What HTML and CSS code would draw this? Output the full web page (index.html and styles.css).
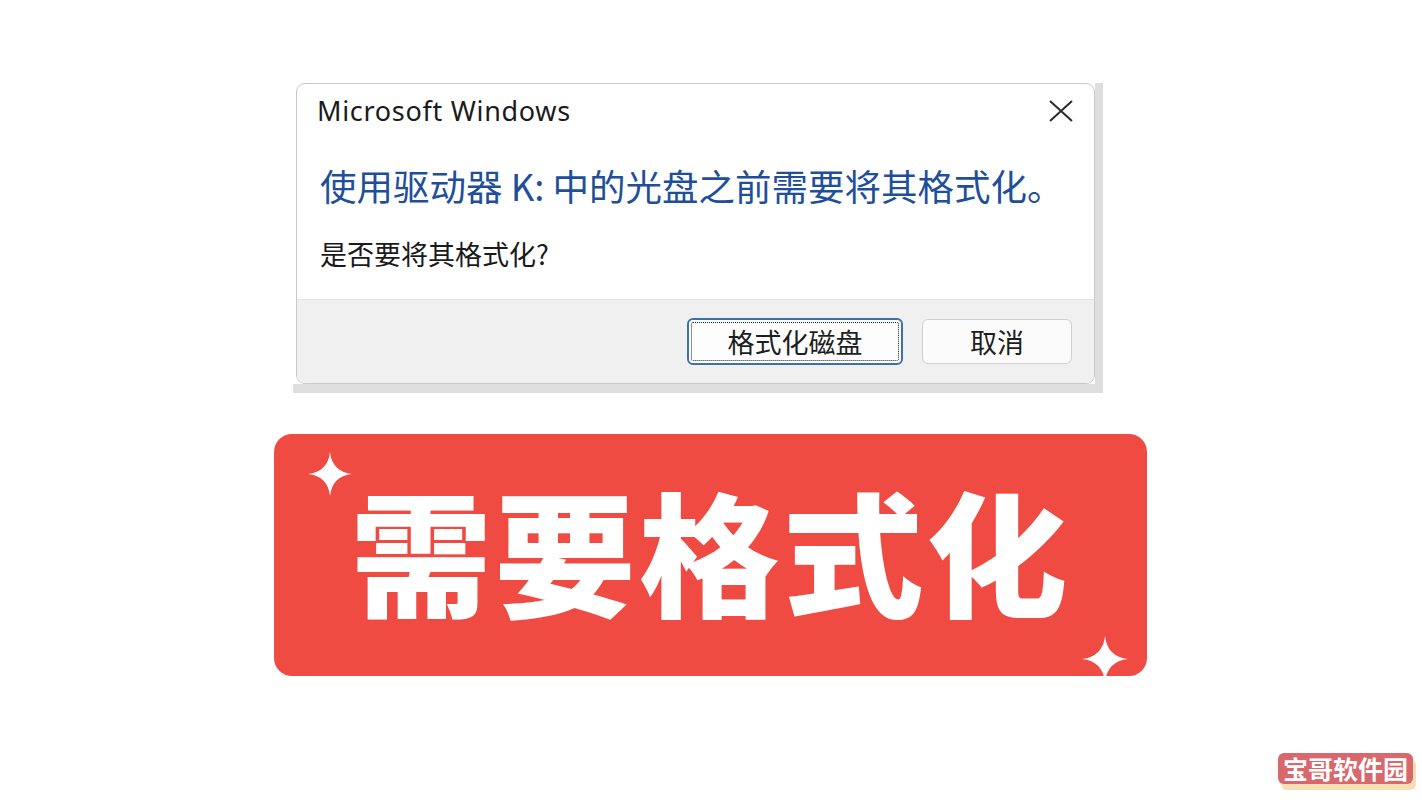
FILE: index.html
```html
<!DOCTYPE html>
<html lang="zh-CN">
<head>
  <meta charset="UTF-8" />
  <meta name="viewport" content="width=device-width, initial-scale=1.0"/>
  <title>需要格式化</title>
  <link rel="stylesheet" href="styles.css">
</head>
<body>

  <main class="page">

    <!-- Dialog screenshot -->
    <div class="shot">
      <div class="dialog">
        <div class="dialog-body">
          <div class="title-row">
            <span class="title">Microsoft Windows</span>
            <svg class="close" width="26" height="22" viewBox="0 0 26 22">
              <path d="M2 1 L24 21 M24 1 L2 21" stroke="#2b2b2b" stroke-width="2" fill="none"/>
            </svg>
          </div>
          <p class="instruction">使用驱动器 K: 中的光盘之前需要将其格式化。</p>
          <p class="content">是否要将其格式化?</p>
        </div>
        <div class="dialog-footer">
          <button class="btn btn-default">格式化磁盘</button>
          <button class="btn">取消</button>
        </div>
      </div>
    </div>

    <!-- Red banner -->
    <div class="banner">
      <svg class="sparkle sparkle-tl" width="46" height="44" viewBox="-1 -1 2 2">
        <path d="M0 -1 Q0.1 -0.1 1 0 Q0.1 0.1 0 1 Q-0.1 0.1 -1 0 Q-0.1 -0.1 0 -1 Z" fill="#fff"/>
      </svg>
      <h1>需要格式化</h1>
      <svg class="sparkle sparkle-br" width="50" height="46" viewBox="-1 -1 2 2">
        <path d="M0 -1 Q0.1 -0.1 1 0 Q0.1 0.1 0 1 Q-0.1 0.1 -1 0 Q-0.1 -0.1 0 -1 Z" fill="#fff"/>
      </svg>
    </div>

  </main>

  <!-- watermark -->
  <div class="watermark">宝哥软件园</div>

</body>
</html>
```

FILE: styles.css
```css
/* --------------------------------
   Reset / Basic
----------------------------------- */
* {
  margin: 0;
  padding: 0;
  box-sizing: border-box;
}
html, body {
  font-family: "Noto Sans", "Noto Sans CJK SC", sans-serif;
  color: #1a1a1a;
  background: #fff;
  overflow: hidden;
}
body {
  width: 1422px;
  height: 800px;
  position: relative;
}

.page {
  display: flex;
  flex-direction: column;
  align-items: flex-start;
  padding: 83px 0 0 274px;
}

/* --------------------------------
   Dialog screenshot
----------------------------------- */
.shot {
  margin-left: 19px;
  width: 810px;
  padding: 0 8px 9px 3px;
  background:
    linear-gradient(#fff, #fff) top left / calc(100% - 8px) calc(100% - 9px) no-repeat,
    #dedede;
}
.dialog {
  width: 799px;
  border: 1px solid #c9c9c9;
  border-radius: 9px;
  overflow: hidden;
  background: #fff;
}
.dialog-body {
  padding: 9px 19px 27px 23px;
}
.title-row {
  display: flex;
  justify-content: space-between;
  align-items: center;
  height: 36px;
}
.title {
  font-size: 27px;
  line-height: 36px;
  letter-spacing: 0.7px;
  color: #1b1b1b;
  margin-left: -3px;
}
.close {
  display: block;
  margin-right: 1px;
}
.instruction {
  margin-top: 33px;
  font-family: "Noto Sans CJK SC", sans-serif;
  font-size: 36.5px;
  line-height: 48px;
  color: #1f4f9a;
}
.content {
  margin-top: 26px;
  font-family: "Noto Sans CJK SC", sans-serif;
  font-size: 27px;
  line-height: 36px;
  color: #1a1a1a;
}
.dialog-footer {
  height: 84px;
  background: #f0f0f0;
  border-top: 1px solid #e2e2e2;
  display: flex;
  justify-content: flex-end;
  align-items: center;
  gap: 19px;
  padding-right: 22px;
}
.btn {
  position: relative;
  font-family: "Noto Sans CJK SC", sans-serif;
  font-size: 27px;
  color: #1e1e1e;
  width: 150px;
  height: 45px;
  border: 1px solid #cfcfcf;
  border-radius: 6px;
  background: #fbfbfb;
  line-height: 1;
}
.btn-default {
  width: 216px;
  height: 47px;
  border: 2px solid #3d71ab;
  background: #fdfdfd;
}
/* 点线フォーカス枠 */
.btn-default::after {
  content: "";
  position: absolute;
  inset: 2px;
  border: 1px dotted #222;
  border-radius: 2px;
}

/* --------------------------------
   Banner
----------------------------------- */
.banner {
  position: relative;
  margin-top: 41px;
  width: 873px;
  height: 242px;
  border-radius: 18px;
  background: #f04b43;
  display: flex;
  justify-content: center;
  align-items: center;
}
.banner h1 {
  font-family: "Noto Sans CJK SC", sans-serif;
  font-weight: 900;
  font-size: 141px;
  line-height: 1;
  letter-spacing: 3px;
  color: #fff;
  margin-bottom: 14px;
  transform: scaleY(0.95);
}
.sparkle {
  position: absolute;
}
.sparkle-tl {
  left: 33px;
  top: 18px;
}
.sparkle-br {
  left: 806px;
  top: 202px;
}

/* --------------------------------
   Watermark
----------------------------------- */
.watermark {
  position: absolute;
  left: 1278px;
  top: 753px;
  width: 135px;
  height: 31px;
  border-radius: 6px;
  background: #d9686c;
  box-shadow: 3px 6px 0 #f6dfb4;
  color: #fff;
  font-family: "Noto Sans CJK SC", sans-serif;
  font-weight: 700;
  font-size: 25px;
  line-height: 31px;
  text-align: center;
}
```
